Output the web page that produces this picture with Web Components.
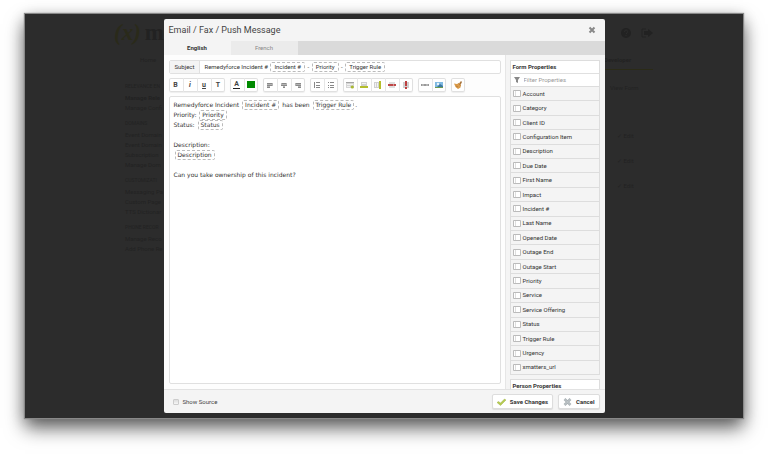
<!DOCTYPE html>
<html lang="en">
<head>
<meta charset="utf-8">
<meta name="viewport" content="width=device-width, initial-scale=1">
<title>Email / Fax / Push Message</title>
<style>
    html, body {
        margin: 0;
        height: 100%;
    }
    body {
        background: #fff;
        font: 6px/10px Roboto, sans-serif;
        color: #333;
    }
</style>
</head>
<body>
<app-window>
    <message-dialog heading="Email / Fax / Push Message">
        <subject-field slot="editor" label="Subject">Remedyforce Incident # <field-token>Incident #</field-token> - <field-token>Priority</field-token> - <field-token>Trigger Rule</field-token></subject-field>
        <editor-toolbar slot="editor"></editor-toolbar>
        <message-body slot="editor">
            <div>Remedyforce Incident <field-token>Incident #</field-token> has been <field-token>Trigger Rule</field-token>.</div>
            <div>Priority: <field-token>Priority</field-token></div>
            <div>Status: <field-token>Status</field-token></div>
            <div><br></div>
            <div>Description:</div>
            <div><field-token>Description</field-token></div>
            <div><br></div>
            <div>Can you take ownership of this incident?</div>
        </message-body>
        <property-list slot="sidebar" heading="Form Properties"></property-list>
    </message-dialog>
</app-window>

<script>
const BACKDROP_MENU = [
    ['Relevance En', ['Manage Rele', 'Manage Confi']],
    ['Domains', ['Event Domain', 'Event Domain', 'Subscription', 'Manage Dom']],
    ['Customizati', ['Messaging Pa', 'Custom Page', 'TTS Dictionar']],
    ['Phone Recor', ['Manage Reco', 'Add Phone Re']]
];

const PROPERTIES = [
    'Account', 'Category', 'Client ID', 'Configuration Item', 'Description', 'Due Date',
    'First Name', 'Impact', 'Incident #', 'Last Name', 'Opened Date', 'Outage End',
    'Outage Start', 'Priority', 'Service', 'Service Offering', 'Status', 'Trigger Rule',
    'Urgency', 'xmatters_url'
];

const TOOLS = [
    [
        ['Bold', '<b>B</b>'],
        ['Italic', '<b><i>i</i></b>'],
        ['Underline', '<b><u>u</u></b>'],
        ['Font', '<b>T</b>']
    ],
    [
        ['Text color', '<b class="ink">A</b>'],
        ['Fill color', '<svg viewBox="0 0 8 8"><path fill="#008a00" d="M0 0h8v7H0z"/></svg>']
    ],
    [
        ['Align left', '<svg viewBox="0 0 8 8"><path fill="#b4b4b4" d="M1 2h6v3H1zM1 5h3v2H1z"/><path fill="#8a8a8a" d="M1 2h5v1H1zM1 4h5v1H1zM1 6h3v1H1z"/></svg>'],
        ['Align center', '<svg viewBox="0 0 8 8"><path fill="#b4b4b4" d="M1 2h6v3H1zM3 5h2v2H3z"/><path fill="#8a8a8a" d="M2 2h4v1H2zM1 4h6v1H1zM3 6h2v1H3z"/></svg>'],
        ['Align right', '<svg viewBox="0 0 8 8"><path fill="#b4b4b4" d="M1 2h6v3H1zM4 5h3v2H4z"/><path fill="#8a8a8a" d="M2 2h5v1H2zM2 4h5v1H2zM4 6h3v1H4z"/></svg>']
    ],
    [
        ['Numbered list', '<svg viewBox="0 0 8 8"><path fill="#888" d="M1 1h1v6H1zM3 1h4v1H3zM3 4h4v1H3zM3 6h4v1H3z"/></svg>'],
        ['Bulleted list', '<svg viewBox="0 0 8 8"><path fill="#888" d="M1 1h1v1H1zM1 4h1v1H1zM1 6h1v1H1zM3 1h4v1H3zM3 4h4v1H3zM3 6h4v1H3z"/></svg>']
    ],
    [
        ['Insert table', '<svg viewBox="0 0 8 8"><path fill="#d6d6d6" d="M0 1h8v6H0z"/><path fill="#a5a5a5" d="M0 1h8v1H0z"/><path fill="#f1f1f1" d="M1 3h6v1H1zM1 5h3v1H1z"/><circle cx="6.3" cy="6" r="1.6" fill="#a9b832"/></svg>'],
        ['Insert row', '<svg viewBox="0 0 8 8"><path fill="#d0d0d0" d="M1 1h6v4H1z"/><path fill="#f3f3f3" d="M2 2h4v1H2z"/><path fill="#b4bd2c" d="M0 5h8v2H0z"/></svg>'],
        ['Insert column', '<svg viewBox="0 0 8 8"><path fill="#d0d0d0" d="M0 1h5v6H0z"/><path fill="#f3f3f3" d="M1 2h1v4H1zM3 2h1v4H3z"/><path fill="#b4bd2c" d="M5 0h2v8H5z"/></svg>'],
        ['Delete row', '<svg viewBox="0 0 8 8"><path fill="#dfdfdf" d="M1 1h6v6H1z"/><path fill="#bd4848" d="M0 3h8v2H0z"/><path fill="#d98c8c" d="M5 3h1v2H5z"/></svg>'],
        ['Delete column', '<svg viewBox="0 0 8 8"><path fill="#d0d0d0" d="M1 1h6v6H1z"/><path fill="#bd4040" d="M3 0h2v5H3zM3 6h2v2H3z"/></svg>']
    ],
    [
        ['Insert link', '<svg viewBox="0 0 8 8"><path fill="#b5b5b5" d="M0 3h8v2H0z"/><path fill="#999" d="M0 3h1v2H0zM3 3h2v2H3zM7 3h1v2H7z"/></svg>'],
        ['Insert image', '<svg viewBox="0 0 8 8"><path fill="#7fb9e2" d="M0 1h8v6H0z"/><circle cx="3" cy="3" r="1.2" fill="#eaf4fa"/><path fill="#3c78a0" d="M2 6l3-3 3 2v2H0V6z"/><path fill="#6f9c50" d="M0 6h8v1H0z"/></svg>']
    ],
    [
        ['Clear formatting', '<svg viewBox="0 0 8 8"><path fill="#a8743c" d="M7 0l1 1-1.500 3L5 2.500z"/><path fill="#d99a4a" d="M0 2.500l3 .5L5 2l2 2-.5 2.500L4 8 1.500 6z"/><path stroke="#a86a2c" stroke-width=".6" fill="none" d="M4.500 2.500l2 2M2 5l2 1"/></svg>']
    ]
];

class AppWindow extends HTMLElement {
    constructor() {
        super();
        this.attachShadow({ mode: 'open' });
    }

    connectedCallback() {
        const menu = BACKDROP_MENU.map(([title, items]) => `
            <section>
                <h2>${title}</h2>
                ${items.map(item => `<a href="#">${item}</a>`).join('')}
            </section>
        `).join('');
        this.shadowRoot.innerHTML = `
            <style>
                :host {
                    display: flex;
                    box-sizing: border-box;
                    height: 100%;
                    padding: 14px 25px 36px;
                    overflow: hidden;
                }
                .screen {
                    flex: 1;
                    position: relative;
                    display: flex;
                    justify-content: center;
                    box-sizing: border-box;
                    padding: 5px 0;
                    background: #2c2c2c;
                    box-shadow: 0 0 1px 1px #888, 0 10px 18px rgba(0,0,0,0.6), 0 2px 14px rgba(0,0,0,0.2);
                }
                /* dimmed page behind the dialog */
                .page {
                    position: absolute;
                    inset: 0;
                    display: flex;
                    justify-content: space-between;
                    padding: 5px 90px 0 89px;
                    color: #222;
                    overflow: hidden;
                }
                a {
                    display: block;
                    color: inherit;
                    text-decoration: none;
                }
                .logo {
                    display: flex;
                    gap: 4px;
                    font: bold 23px/28px "Liberation Serif", serif;
                }
                .logo i { color: #2a2a1a; }
                nav {
                    padding-left: 11px;
                }
                .home {
                    margin: 8px 0 17px 15px;
                }
                h2 {
                    margin: 0 0 3px;
                    font-size: 5px;
                    font-weight: normal;
                    line-height: 8px;
                    text-transform: uppercase;
                }
                section { margin-bottom: 6px; }
                section:first-of-type a:first-of-type { font-weight: bold; }
                .tools {
                    width: 49px;
                }
                .icons {
                    display: flex;
                    gap: 9px;
                    height: 28px;
                    align-items: center;
                    justify-content: flex-end;
                }
                .icons svg {
                    width: 12px;
                    height: 12px;
                }
                .active {
                    margin-top: 8px;
                    padding-bottom: 4px;
                    border-bottom: 1px solid #2b2b17;
                    font-weight: bold;
                }
                .view { margin: 13px 0 38px 6px; }
                .edit { margin: 0 0 15px 13px; }
            </style>
            <div class="screen">
                <div class="page" inert>
                    <div>
                        <div class="logo"><i>(x)</i><span>m</span></div>
                        <nav>
                            <a class="home" href="#">Home</a>
                            ${menu}
                        </nav>
                    </div>
                    <div class="tools">
                        <div class="icons">
                            <svg viewBox="0 0 12 12"><circle cx="6" cy="6" r="5" fill="#222"/><path fill="none" stroke="#2c2c2c" d="M4.500 5q0-2 1.500-2t1.500 1.500T6 7M6 8v1"/></svg>
                            <svg viewBox="0 0 12 12"><path fill="none" stroke="#222" d="M5 2H1v8h4"/><path fill="#222" d="M3 4h4V2l5 4-5 4V8H3z"/></svg>
                        </div>
                        <a class="active" href="#">Developer</a>
                        <a class="view" href="#">View Form</a>
                        <a class="edit" href="#">✓ Edit</a>
                        <a class="edit" href="#">✓ Edit</a>
                        <a class="edit" href="#">✓ Edit</a>
                    </div>
                </div>
                <slot></slot>
            </div>
        `;
    }
}

class MessageDialog extends HTMLElement {
    constructor() {
        super();
        this.attachShadow({ mode: 'open' });
    }

    connectedCallback() {
        this.shadowRoot.innerHTML = `
            <style>
                :host {
                    position: relative;
                    display: flex;
                    flex-direction: column;
                    width: 61%;
                    min-width: 441px;
                    border-radius: 2px;
                    overflow: hidden;
                    background: #f4f4f4;
                }
                header {
                    display: flex;
                    justify-content: space-between;
                    align-items: center;
                    height: 22px;
                    padding: 0 9px 0 5px;
                }
                h1 {
                    margin: 0;
                    font-size: 9px;
                    font-weight: normal;
                    color: #444;
                }
                button {
                    font: inherit;
                    color: inherit;
                }
                .close {
                    display: flex;
                    padding: 0;
                    border: 0;
                    background: none;
                }
                .close svg {
                    width: 8px;
                    height: 8px;
                }
                .tabs {
                    display: flex;
                    height: 14px;
                    background: #dadada;
                }
                .tabs button {
                    width: 67px;
                    padding: 0;
                    border: 0;
                    background: #ebebeb;
                    color: #888;
                }
                .tabs [aria-selected="true"] {
                    background: #f4f4f4;
                    color: #333;
                    font-weight: bold;
                }
                .body {
                    flex: 1;
                    min-height: 0;
                    display: grid;
                    grid-template-columns: 1fr 100px;
                }
                .main {
                    display: flex;
                    flex-direction: column;
                    gap: 4px;
                    padding: 5px 4px 5px 5px;
                    background: #fdfdfd;
                }
                aside {
                    display: flex;
                    flex-direction: column;
                    min-height: 0;
                    overflow: hidden;
                    padding: 5px 5px 0 4px;
                    border-left: 1px solid #e6e6e6;
                }
                footer {
                    display: flex;
                    align-items: center;
                    gap: 5px;
                    height: 23px;
                    padding: 0 5px 0 9px;
                    border-top: 1px solid #e2e2e2;
                }
                label {
                    display: flex;
                    align-items: center;
                    gap: 4px;
                    margin-right: auto;
                    color: #444;
                }
                input {
                    appearance: none;
                    box-sizing: border-box;
                    width: 6px;
                    height: 6px;
                    margin: 0;
                    border: 1px solid #ccc;
                    border-radius: 1px;
                    background: linear-gradient(#ddd, #f6f6f6);
                }
                footer button {
                    display: flex;
                    align-items: center;
                    gap: 4px;
                    height: 15px;
                    padding: 0 4px;
                    border: 1px solid #ddd;
                    border-radius: 2px;
                    background: #fff;
                    box-shadow: 0 1px 1px #ddd;
                    font-weight: bold;
                    color: #333;
                }
                footer svg {
                    width: 9px;
                    height: 8px;
                }
            </style>
            <header>
                <h1>${this.getAttribute('heading')}</h1>
                <button class="close" aria-label="Close">
                    <svg viewBox="0 0 8 8"><path stroke="#888" stroke-width="2" d="M1.500 1.500l5 5M6.500 1.500l-5 5"/></svg>
                </button>
            </header>
            <div class="tabs" role="tablist">
                <button role="tab" aria-selected="true">English</button>
                <button role="tab" aria-selected="false">French</button>
            </div>
            <div class="body">
                <div class="main"><slot name="editor"></slot></div>
                <aside><slot name="sidebar"></slot></aside>
            </div>
            <footer>
                <label><input type="checkbox">Show Source</label>
                <button>
                    <svg viewBox="0 0 9 8"><path fill="#b6cb50" stroke="#94a83c" stroke-width=".4" d="M0 4.500L1.500 3.500 3.500 5 7.500 1 9 2 3.500 7.500z"/></svg>
                    Save Changes
                </button>
                <button>
                    <svg viewBox="0 0 9 8"><path stroke="#a9b0b4" stroke-width="2.500" d="M1.500 1l6 6M7.500 1l-6 6"/><path stroke="#d5dadc" stroke-width=".6" d="M1.500 1l6 6M7.500 1l-6 6"/></svg>
                    Cancel
                </button>
            </footer>
        `;
    }
}

class FieldToken extends HTMLElement {
    constructor() {
        super();
        this.attachShadow({ mode: 'open' });
    }

    connectedCallback() {
        this.shadowRoot.innerHTML = `
            <style>
                :host {
                    display: inline-block;
                    box-sizing: border-box;
                    height: 10px;
                    margin: 0 1px;
                    padding: 0 var(--token-padding, 2px);
                    border: 1px dashed #bbb;
                    border-radius: 2px;
                    line-height: 8px;
                    vertical-align: top;
                }
            </style>
            <slot></slot>
        `;
    }
}

class SubjectField extends HTMLElement {
    constructor() {
        super();
        this.attachShadow({ mode: 'open' });
    }

    connectedCallback() {
        this.shadowRoot.innerHTML = `
            <style>
                :host {
                    --token-padding: 3px;
                    display: flex;
                    height: 12px;
                    border: 1px solid #e0e0e0;
                    border-radius: 2px;
                    background: #fff;
                    line-height: 10px;
                    overflow: hidden;
                }
                #label {
                    padding: 1px 5px;
                    border-right: 1px solid #e0e0e0;
                    background: #f4f4f4;
                }
                #value {
                    flex: 1;
                    padding: 1px 4px;
                }
            </style>
            <span id="label">${this.getAttribute('label')}</span>
            <div id="value" role="textbox" contenteditable="true" aria-labelledby="label" spellcheck="false"><slot></slot></div>
        `;
    }
}

class EditorToolbar extends HTMLElement {
    constructor() {
        super();
        this.attachShadow({ mode: 'open' });
    }

    connectedCallback() {
        const groups = TOOLS.map(group => `
            <div class="group">
                ${group.map(([name, icon]) => `<button aria-label="${name}">${icon}</button>`).join('')}
            </div>
        `).join('');
        this.shadowRoot.innerHTML = `
            <style>
                :host {
                    display: flex;
                    gap: 5px;
                }
                .group {
                    display: flex;
                    height: 14px;
                    border-radius: 2px;
                    background: #fff;
                    box-shadow: inset 0 0 0 1px #e0e0e0, 0 1px 1px #eee;
                }
                button {
                    display: flex;
                    align-items: center;
                    justify-content: center;
                    box-sizing: border-box;
                    width: 14px;
                    padding: 0;
                    border: 0;
                    background: none;
                    font: 7px/8px Roboto, sans-serif;
                    color: #444;
                }
                button + button {
                    border-left: 1px solid #e6e6e6;
                }
                svg {
                    width: 8px;
                    height: 8px;
                }
                .ink {
                    padding: 0 1px;
                    border-bottom: 1px solid #222;
                    line-height: 7px;
                }
            </style>
            ${groups}
        `;
    }
}

class MessageBody extends HTMLElement {
    constructor() {
        super();
        this.attachShadow({ mode: 'open' });
    }

    connectedCallback() {
        this.shadowRoot.innerHTML = `
            <style>
                :host {
                    flex: 1;
                    display: flex;
                    border: 1px solid #e0e0e0;
                    border-radius: 2px;
                    background: #fff;
                    font-family: "DejaVu Sans", sans-serif;
                }
                .text {
                    flex: 1;
                    padding: 3px 4px;
                }
            </style>
            <div class="text" role="textbox" aria-multiline="true" aria-label="Message" contenteditable="true" spellcheck="false"><slot></slot></div>
        `;
    }
}

class PropertyList extends HTMLElement {
    constructor() {
        super();
        this.attachShadow({ mode: 'open' });
    }

    connectedCallback() {
        const rows = PROPERTIES.map(name => `
            <li>
                <svg viewBox="0 0 8 7"><path fill="#fff" stroke="#bbb" d="M.5.5h7v6h-7z"/><path stroke="#ddd" d="M2.500 1v5"/></svg>
                ${name}
            </li>
        `).join('');
        this.shadowRoot.innerHTML = `
            <style>
                :host {
                    flex: 1;
                    display: flex;
                    flex-direction: column;
                    min-height: 0;
                }
                .panel {
                    flex: 1;
                    display: flex;
                    flex-direction: column;
                    border: 1px solid #ddd;
                }
                h2 {
                    margin: 0;
                    padding: 0 2px;
                    background: #fff;
                    font-size: 6px;
                    line-height: 12px;
                }
                .filter {
                    display: flex;
                    align-items: center;
                    gap: 4px;
                    height: 12px;
                    padding: 0 3px;
                    border-top: 1px solid #e0e0e0;
                    background: #fff;
                }
                .filter svg {
                    width: 6px;
                    height: 6px;
                }
                input {
                    flex: 1;
                    min-width: 0;
                    padding: 0;
                    border: 0;
                    outline: 0;
                    background: none;
                    font: inherit;
                }
                input::placeholder { color: #999; }
                ul {
                    flex: 1;
                    display: flex;
                    flex-direction: column;
                    margin: 0;
                    padding: 0;
                    list-style: none;
                }
                li {
                    flex: 1;
                    display: flex;
                    align-items: center;
                    gap: 2px;
                    padding-left: 2px;
                    border-top: 1px solid #ddd;
                }
                li svg {
                    width: 8px;
                    height: 7px;
                }
                .next {
                    height: 9px;
                    margin-top: 4px;
                    border: 1px solid #ddd;
                    border-bottom: 0;
                    overflow: hidden;
                }
            </style>
            <div class="panel">
                <h2>${this.getAttribute('heading')}</h2>
                <label class="filter">
                    <svg viewBox="0 0 6 6"><path fill="#888" d="M0 0h6L4 3v3L2 5V3z"/></svg>
                    <input type="text" placeholder="Filter Properties" aria-label="Filter Properties">
                </label>
                <ul>${rows}</ul>
            </div>
            <div class="next"><h2>Person Properties</h2></div>
        `;
    }
}

customElements.define('app-window', AppWindow);
customElements.define('message-dialog', MessageDialog);
customElements.define('field-token', FieldToken);
customElements.define('subject-field', SubjectField);
customElements.define('editor-toolbar', EditorToolbar);
customElements.define('message-body', MessageBody);
customElements.define('property-list', PropertyList);
</script>
</body>
</html>
